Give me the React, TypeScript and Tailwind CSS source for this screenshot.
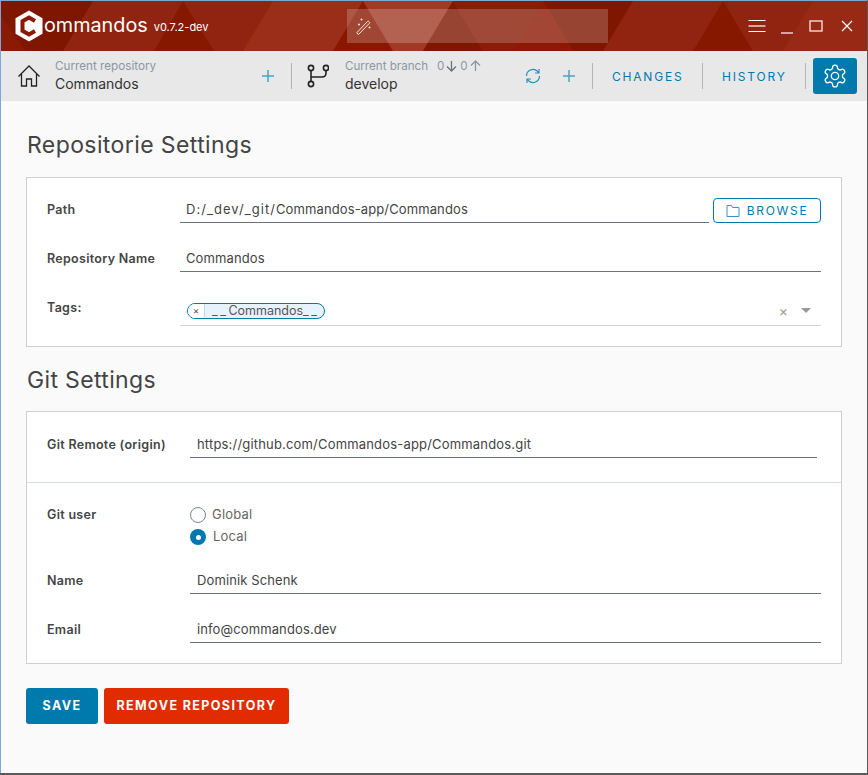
import type { ReactNode } from "react";

const font = { fontFamily: '"Inter", "Liberation Sans", sans-serif' };

function Divider({ className = "" }: { className?: string }) {
  return <div className={`w-px h-[26px] bg-[#b5b5b5] ${className}`} />;
}

function Plus({ className = "" }: { className?: string }) {
  return (
    <svg className={className} width="14" height="14" viewBox="0 0 14 14" fill="none" stroke="#4aa3c8" strokeWidth="1.5">
      <path d="M7 1v12M1 7h12" />
    </svg>
  );
}

// triangles behind the title bar
function TitleBackground() {
  return (
    <svg className="absolute inset-0" width="868" height="50" viewBox="0 0 868 50">
      <rect width="868" height="50" fill="#912410" />
      <path d="M0 0H92L62 50H0z" fill="#7f1600" />
      <path d="M0 15L25 50H0z" fill="#8b1a05" />
      <path d="M182 0L213 50H153z" fill="#871800" />
      <path d="M272 0H362L332 50H242z" fill="#9a2e18" />
      <path d="M362 0L392 50H332z" fill="#8a1800" />
      <path d="M362 0H452L422 50H392z" fill="#a03a25" />
      <path d="M452 0L482 50H422z" fill="#7f1600" />
      <path d="M452 0H542L512 50H482z" fill="#8a1c08" />
      <path d="M542 0H632L602 50H572z" fill="#7f1600" />
      <path d="M542 0L572 50H512z" fill="#8e1803" />
      <path d="M722 0L752 50H692z" fill="#871800" />
      <path d="M812 0H868V50H782z" fill="#982a15" />
    </svg>
  );
}

function Field({ children, className = "" }: { children: ReactNode; className?: string }) {
  return (
    <div className={`border-b border-[#6a7378] text-[13px] tracking-[0.12px] text-[#444] ${className}`}>
      {children}
    </div>
  );
}

function Row({ label, children, className = "", labelClass = "w-[133px] leading-[24px]" }: { label: string; children: ReactNode; className?: string; labelClass?: string }) {
  return (
    <div className={`flex items-start ${className}`}>
      <div className={`shrink-0 text-[12.5px] tracking-[0.3px] font-semibold text-[#454545] ${labelClass}`}>{label}</div>
      {children}
    </div>
  );
}

export default function App() {
  return (
    <div className="w-[868px] h-[775px] overflow-hidden bg-[#5a5a5a] relative" style={font}>
      <div className="flex flex-col h-[773px] w-[867px] border-l border-t border-[#7da7d9] bg-[#fafafa]">
        {/* titlebar */}
        <div className="relative h-[50px] shrink-0 overflow-hidden flex items-center text-white">
          <TitleBackground />
          <svg className="relative ml-[13px]" width="30" height="32" viewBox="0 0 30 32">
            <path d="M15 0.5 L28.5 8.2 V23.8 L15 31.5 L1.5 23.8 V8.2z" fill="#fff" />
            <path d="M21 11 L15 7.5 L8.5 11.2 V20.8 L15 24.5 L21 21" fill="none" stroke="#8a1a05" strokeWidth="4" />
          </svg>
          <span className="relative text-[19.8px] leading-none">ommandos</span>
          <span className="relative ml-[6px] mt-[3px] text-[11px]">v0.7.2-dev</span>
          <div className="absolute left-[346px] top-[8px] h-[34px] w-[261px] bg-white/20 flex items-center pl-[8px]">
            <svg width="18" height="18" viewBox="0 0 18 18" fill="none" stroke="#f6e3df" strokeWidth="1">
              <path d="M2 15.5L12.5 4.5a1 1 0 0 1 1.5 0.2l0.3 0.3a1 1 0 0 1 0 1.4L4 17a1 1 0 0 1-1.5 0z" />
              <path d="M6.5 1.5v2M5.5 2.5h2M4 6.5v2M3 7.5h2M14.5 9.5v2M13.5 10.5h2" />
            </svg>
          </div>
          <div className="absolute left-[747px] top-0 h-[50px] flex items-center">
            <svg width="18" height="14" viewBox="0 0 18 14" stroke="#fff">
              <path d="M0.5 1.5h17M0.5 12.5h17" />
              <path d="M0.5 7h17" strokeWidth="2" opacity="0.6" />
            </svg>
            <svg className="ml-[15px] mt-[1px]" width="12" height="14" viewBox="0 0 12 14" stroke="#fff" strokeWidth="1.2"><path d="M0 13h12" /></svg>
            <svg className="ml-[16px]" width="14" height="12" viewBox="0 0 14 12" fill="none" stroke="#f5dcd6" strokeWidth="1.4"><rect x="1" y="1" width="12" height="10" /></svg>
            <svg className="ml-[18px]" width="12" height="12" viewBox="0 0 12 12" stroke="#fff" strokeWidth="1.2"><path d="M1 1l10 10M11 1L1 11" /></svg>
          </div>
        </div>

        {/* toolbar */}
        <div className="h-[50px] shrink-0 bg-[#e8e8e8] flex items-center pl-[16px] text-[#333]">
          <svg width="24" height="24" viewBox="0 0 24 24" fill="none" stroke="#222" strokeWidth="1.3">
            <path d="M1.5 12.5 L12 2 L22.5 12.5 M4.5 10 V22 H9.5 V15 H14.5 V22 H19.5 V10" />
          </svg>
          <div className="ml-[14px] w-[206px] shrink-0">
            <div className="text-[11.7px] leading-[16px] text-[#8b97a3]">Current repository</div>
            <div className="text-[14px] leading-[20px]">Commandos</div>
          </div>
          <Plus />
          <Divider className="ml-[16px]" />
          <svg className="ml-[15px]" width="22" height="24" viewBox="0 0 22 24" fill="none" stroke="#222" strokeWidth="1.6">
            <circle cx="4" cy="4" r="2.6" /><circle cx="19" cy="4" r="2.6" /><circle cx="4" cy="20" r="2.6" />
            <path d="M4 6.6V17.4M4 13h11q4 0 4-4V6.6" />
          </svg>
          <div className="ml-[16px] w-[180px] shrink-0">
            <div className="text-[11.6px] leading-[16px] text-[#8b97a3] flex items-center">
              Current branch<span className="ml-[9px]">0</span>
              <svg className="ml-[2px]" width="11" height="12" viewBox="0 0 11 12" fill="none" stroke="#68737d" strokeWidth="1.3"><path d="M5.5 1v10M1 6.5l4.5 4.5 4.5-4.5" /></svg>
              <span className="ml-[3px]">0</span>
              <svg className="ml-[2px]" width="11" height="12" viewBox="0 0 11 12" fill="none" stroke="#8b97a3" strokeWidth="1.3"><path d="M5.5 11V1M1 5.5L5.5 1l4.5 4.5" /></svg>
            </div>
            <div className="text-[14px] leading-[20px]">develop</div>
          </div>
          <svg width="16" height="16" viewBox="0 0 16 16" fill="none" stroke="#2d8dbb" strokeWidth="1.2">
            <path d="M1.5 8a6.5 6.5 0 0 1 11-4.7L14 5M14 1v4h-4M14.5 8a6.5 6.5 0 0 1-11 4.7L2 11M2 15v-4h4" />
          </svg>
          <Plus className="ml-[21px]" />
          <Divider className="ml-[16px]" />
          <div className="ml-[19px] mt-[2px] w-[71px] text-[12px] tracking-[1.8px] text-[#0079ad] whitespace-nowrap">CHANGES</div>
          <Divider className="ml-[19px]" />
          <div className="ml-[19px] mt-[2px] w-[65px] text-[12px] tracking-[1.8px] text-[#0079ad] whitespace-nowrap">HISTORY</div>
          <Divider className="ml-[18px]" />
          <div className="ml-[7px] w-[44px] h-[36px] rounded-[3px] bg-[#0079ad] flex items-center justify-center">
            <svg width="26" height="26" viewBox="0 0 24 24" fill="none" stroke="#fff" strokeWidth="1.2">
              <circle cx="12" cy="12" r="3.4" />
              <path d="M12.22 2h-.44a2 2 0 0 0-2 2v.18a2 2 0 0 1-1 1.73l-.43.25a2 2 0 0 1-2 0l-.15-.08a2 2 0 0 0-2.73.73l-.22.38a2 2 0 0 0 .73 2.73l.15.1a2 2 0 0 1 1 1.72v.51a2 2 0 0 1-1 1.74l-.15.09a2 2 0 0 0-.73 2.73l.22.38a2 2 0 0 0 2.73.73l.15-.08a2 2 0 0 1 2 0l.43.25a2 2 0 0 1 1 1.73V20a2 2 0 0 0 2 2h.44a2 2 0 0 0 2-2v-.18a2 2 0 0 1 1-1.73l.43-.25a2 2 0 0 1 2 0l.15.08a2 2 0 0 0 2.73-.73l.22-.39a2 2 0 0 0-.73-2.73l-.15-.08a2 2 0 0 1-1-1.74v-.5a2 2 0 0 1 1-1.74l.15-.09a2 2 0 0 0 .73-2.73l-.22-.38a2 2 0 0 0-2.73-.73l-.15.08a2 2 0 0 1-2 0l-.43-.25a2 2 0 0 1-1-1.73V4a2 2 0 0 0-2-2z" />
            </svg>
          </div>
        </div>

        {/* content */}
        <div className="flex-1 pl-[25px] pr-[25px] pt-[29px]">
          <h2 className="pl-[1px] text-[23px] leading-[30px] tracking-[0.4px] text-[#444]">Repositorie Settings</h2>
          <div className="mt-[17px] h-[170px] border border-[#cfcfcf] bg-white pl-[20px] pr-[20px] pt-[20px]">
            <Row label="Path">
              <Field className="w-[529px] h-[25px] pl-[6px] leading-[23px]">
                <span className="tracking-[1.05px]">D:/_dev/_git/</span>Commandos-app/Commandos
              </Field>
              <div className="ml-[4px] w-[108px] h-[25px] rounded-[4px] border border-[#0079ad] flex items-center justify-center text-[12px] tracking-[1.7px] text-[#0079ad]">
                <svg className="mr-[7px]" width="14" height="14" viewBox="0 0 14 14" fill="none" stroke="#3c93bb" strokeWidth="1"><path d="M1 1.5h4.5l1 2H13v9H1z" /></svg>
                BROWSE
              </div>
            </Row>
            <Row label="Repository Name" className="mt-[24px]">
              <Field className="flex-1 h-[25px] pl-[6px] leading-[23px]">Commandos</Field>
            </Row>
            <Row label="Tags:" className="mt-[24px]">
              <div className="flex-1 h-[30px] border-b border-[#cfd4d6] flex items-center pl-[7px] pr-[10px]">
                <div className="h-[16px] w-[138px] rounded-full border border-[#0079ad] bg-[#e6f3fc] flex items-center text-[12.5px] text-[#565656] overflow-hidden">
                  <span className="w-[17px] h-full shrink-0 bg-white border-r border-[#b9dcf0] text-[10px] leading-[13px] text-center">×</span>
                  <span className="pl-[7px] whitespace-nowrap leading-[14px]">
                    <span className="tracking-[2.5px]">__</span>Commandos<span className="tracking-[2.5px]">__</span>
                  </span>
                </div>
                <span className="ml-auto text-[14px] text-[#999]">×</span>
                <div className="ml-[13px] w-0 h-0 border-l-[5px] border-r-[5px] border-t-[5px] border-l-transparent border-r-transparent border-t-[#999]" />
              </div>
            </Row>
          </div>

          <h2 className="mt-[18px] pl-[1px] text-[23px] leading-[30px] tracking-[0.35px] text-[#444]">Git Settings</h2>
          <div className="mt-[16px] h-[253px] border border-[#cfcfcf] bg-white">
            <div className="h-[71px] pl-[20px] pr-[24px] pt-[20px] border-b border-[#d5dde0]">
              <Row label="Git Remote (origin)" labelClass="w-[143px] leading-[26px]">
                <Field className="flex-1 h-[26px] pl-[7px] leading-[24px]">
                  <span className="tracking-[0.18px]">https://github.com/Commandos-app/Commandos.git</span>
                </Field>
              </Row>
            </div>
            <div className="pl-[20px] pr-[20px] pt-[20px]">
              <div className="flex">
                <div className="w-[143px] text-[12.5px] tracking-[0.3px] leading-[24px] font-semibold text-[#454545]">Git user</div>
                <div className="flex flex-col gap-[6px] text-[13px] tracking-[0.2px] text-[#666]">
                  <div className="flex items-center h-[16px] mt-[4px]">
                    <span className="w-4 h-4 rounded-full border border-[#7a868c]" />
                    <span className="ml-[6px]">Global</span>
                  </div>
                  <div className="flex items-center h-[16px]">
                    <span className="w-4 h-4 rounded-full bg-[#0079ad] flex items-center justify-center">
                      <span className="w-[5px] h-[5px] rounded-full bg-white" />
                    </span>
                    <span className="ml-[7px]">Local</span>
                  </div>
                </div>
              </div>
              <Row label="Name" className="mt-[23px]" labelClass="w-[143px] leading-[26px]">
                <Field className="flex-1 h-[26px] pl-[7px] leading-[24px]">Dominik Schenk</Field>
              </Row>
              <Row label="Email" className="mt-[23px]" labelClass="w-[143px] leading-[26px]">
                <Field className="flex-1 h-[26px] pl-[7px] leading-[24px]">info@commandos.dev</Field>
              </Row>
            </div>
          </div>

          <div className="mt-[24px] flex gap-[6px] text-[12.5px] font-bold tracking-[1.4px] text-white">
            <div className="w-[72px] h-[36px] rounded-[3px] bg-[#0079ad] flex items-center justify-center">SAVE</div>
            <div className="w-[185px] h-[36px] rounded-[3px] bg-[#e12b00] flex items-center justify-center">REMOVE REPOSITORY</div>
          </div>
        </div>
      </div>
    </div>
  );
}
